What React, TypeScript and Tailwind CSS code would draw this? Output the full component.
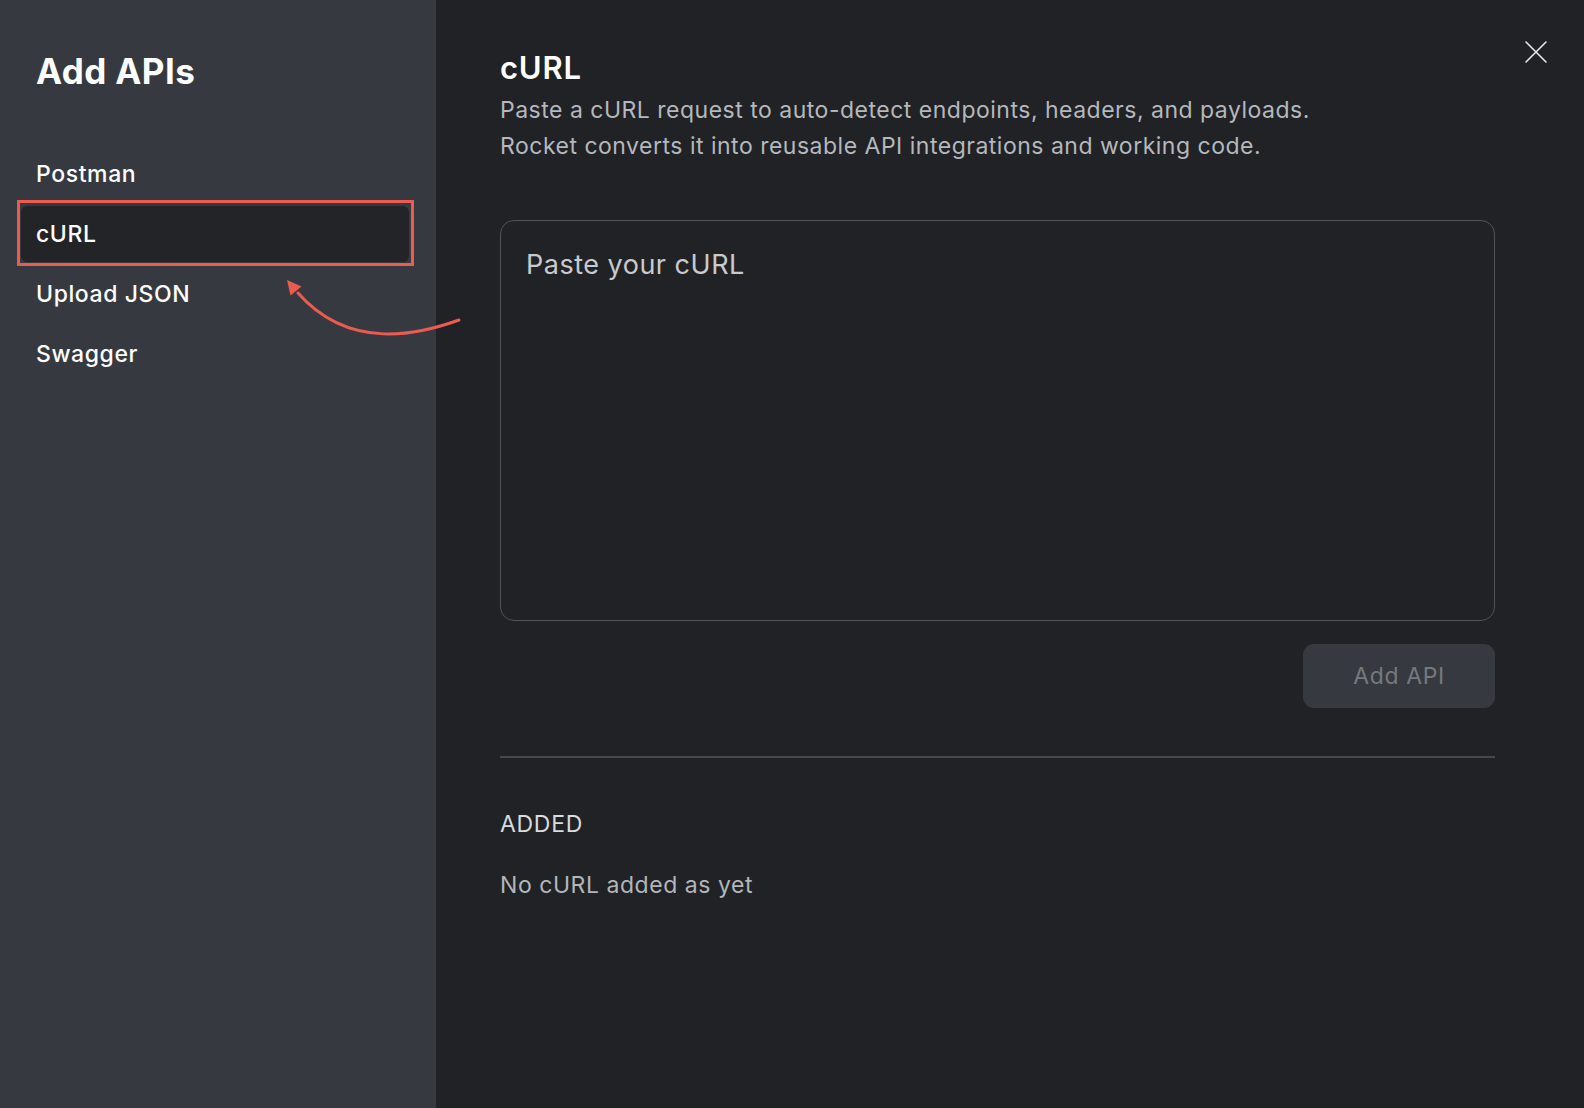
import React from "react";

const sources = ["Postman", "cURL", "Upload JSON", "Swagger"];

const CloseIcon = () => (
  <svg width="22" height="22" viewBox="0 0 22 22" fill="none" stroke="currentColor" strokeWidth="1.6" strokeLinecap="round">
    <path d="M1 1L21 21M21 1L1 21" />
  </svg>
);

const Sidebar = ({ active }: { active: string }) => (
  <aside className="flex h-full w-[436px] shrink-0 flex-col bg-[#363a40] pt-[49px]">
    <h2 className="pl-[36px] text-[35px] leading-[44px] font-bold tracking-[0.4px] text-white">Add APIs</h2>
    <ul className="mt-[53px] flex flex-col gap-[4px] pl-[21px]">
      {sources.map((s) => (
        <li
          key={s}
          className={
            s === active
              ? "flex h-[56px] w-[388px] items-center rounded-[6px] bg-[#222428] pl-[15px] text-[23px] font-medium tracking-[0.6px] text-white"
              : "flex h-[56px] w-[388px] items-center pl-[15px] text-[23px] font-medium tracking-[0.6px] text-white"
          }
        >
          {s}
        </li>
      ))}
    </ul>
  </aside>
);

const AddedList = () => (
  <section>
    <h4 className="mt-[50px] text-[23px] leading-[32px] tracking-[0.7px] text-[#d9dbde]">ADDED</h4>
    <p className="mt-[29px] text-[23px] leading-[32px] tracking-[0.55px] text-[#b3b6ba]">No cURL added as yet</p>
  </section>
);

export default function App() {
  return (
    <div
      className="relative flex h-[1108px] w-[1584px] overflow-hidden bg-[#202226]"
      style={{ fontFamily: "Inter, 'Noto Sans', sans-serif" }}
    >
      <Sidebar active="cURL" />

      <main className="relative flex flex-1 flex-col pt-[50px] pr-[89px] pl-[64px]">
        <button className="absolute top-[41px] right-[37px] text-[#e8e9eb]">
          <CloseIcon />
        </button>

        <h3 className="text-[31px] leading-[36px] font-semibold tracking-[0.8px] text-white">cURL</h3>
        <p className="mt-[7px] text-[23px] leading-[35.5px] tracking-[0.5px] text-[#b5b8bc]">
          Paste a cURL request to auto-detect endpoints, headers, and payloads.
          <br />
          Rocket converts it into reusable API integrations and working code.
        </p>

        <textarea
          className="mt-[56px] h-[401px] w-full resize-none rounded-[14px] border border-[#505358] bg-transparent px-[25px] pt-[26px] text-[27px] leading-[36px] tracking-[0.5px] text-white outline-none placeholder:text-[#c8cacd]"
          placeholder="Paste your cURL"
        />

        <div className="mt-[23px] flex justify-end">
          <button className="h-[64px] w-[192px] rounded-[11px] bg-[#363a40] text-[23px] tracking-[0.6px] text-[#75797f]">
            Add API
          </button>
        </div>

        <hr className="mt-[48px] border-t-[2px] border-[#45484d]" />

        <AddedList />
      </main>

      {/* highlight + pointer drawn over the sidebar */}
      <div className="pointer-events-none absolute top-[200px] left-[17px] h-[66px] w-[397px] border-[3px] border-[#ec5b4f]" />
      <svg className="pointer-events-none absolute top-0 left-0" width="1584" height="1108" fill="none">
        <path d="M459 320C420 334 350 352 298 293" stroke="#ec5b4f" strokeWidth="3" strokeLinecap="round" />
        <path d="M287 280L301.5 286.5L290.5 295.5Z" fill="#ec5b4f" />
      </svg>
    </div>
  );
}
